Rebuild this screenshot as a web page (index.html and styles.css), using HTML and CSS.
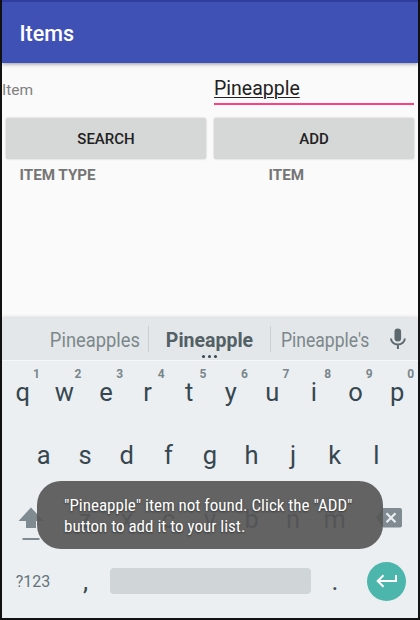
FILE: index.html
```
<!DOCTYPE html>
<html lang="en">
<head>
<meta charset="utf-8">
<title>Items</title>
<link rel="stylesheet" href="styles.css">
</head>
<body>
<div class="screen">
  <header class="appbar"><h1>Items</h1></header>
  <main class="content">
    <div class="field-row">
      <label class="label">Item</label>
      <div class="input"><span>Pineapple</span></div>
    </div>
    <div class="buttons">
      <button><span>SEARCH</span></button>
      <button><span>ADD</span></button>
    </div>
    <div class="heads"><span>ITEM TYPE</span><span>ITEM</span></div>
  </main>
  <section class="keyboard">
    <div class="suggestions">
      <div class="sug first"><span>Pineapples</span></div>
      <div class="sug main"><span>Pineapple</span><i class="dots"></i></div>
      <div class="sug last"><span>Pineapple's</span></div>
      <svg class="mic" width="16" height="22" viewBox="0 0 16 22"><rect x="4.5" y="0.5" width="6.6" height="13" rx="3.3" fill="#5d696e"/><path d="M1 10.5a6.9 6 0 0 0 13.8 0M7.9 16.5V21" fill="none" stroke="#5d696e" stroke-width="2"/></svg>
    </div>
    <div class="keys row1">
      <div class="key">q<sup>1</sup></div><div class="key">w<sup>2</sup></div><div class="key">e<sup>3</sup></div><div class="key">r<sup>4</sup></div><div class="key">t<sup>5</sup></div><div class="key">y<sup>6</sup></div><div class="key">u<sup>7</sup></div><div class="key">i<sup>8</sup></div><div class="key">o<sup>9</sup></div><div class="key">p<sup>0</sup></div>
    </div>
    <div class="keys row2">
      <div class="key">a</div><div class="key">s</div><div class="key">d</div><div class="key">f</div><div class="key">g</div><div class="key">h</div><div class="key">j</div><div class="key">k</div><div class="key">l</div>
    </div>
    <div class="keys row3">
      <div class="side shift"><svg width="26" height="34" viewBox="0 0 26 34"><path d="M13 .5 25.5 14H18v7H8v-7H.5z" fill="#7f8b90"/><path d="M4.5 31h17v2h-17z" fill="#7f8b90"/></svg></div>
      <div class="key">z</div><div class="key">x</div><div class="key">c</div><div class="key">v</div><div class="key">b</div><div class="key">n</div><div class="key">m</div>
      <div class="side back"><svg width="26" height="20" viewBox="0 0 26 20"><path d="M7 0h17a2 2 0 0 1 2 2v15.500a2 2 0 0 1-2 2H7L0 9.750z" fill="#7f8b90"/><path d="m10.500 5.200 9 9m0-9-9 9" stroke="#ebeff2" stroke-width="2.200"/></svg></div>
    </div>
    <div class="bottom">
      <div class="sym"><span>?123</span></div>
      <div class="punct comma">,</div>
      <div class="space"></div>
      <div class="punct dot">.</div>
      <div class="enter"><svg width="22" height="14" viewBox="0 0 22 14"><path d="M20 1v6H2M7.500 1.200 1.700 7l5.800 5.800" fill="none" stroke="#fff" stroke-width="2"/></svg></div>
    </div>
  </section>
  <div class="toast"><p>"Pineapple" item not found. Click the "ADD"</p><p>button to add it to your list.</p></div>
</div>
</body>
</html>
```
FILE: styles.css
```
* { box-sizing: border-box; }
body { margin: 0; background: #111; font-family: Roboto, sans-serif; }
.screen {
  position: relative;
  width: 416px;
  height: 618px;
  margin: 0 2px 2px;
  background: #fafafa;
  overflow: hidden;
  display: flex;
  flex-direction: column;
}
.appbar {
  height: 63px;
  flex: none;
  background: #3f51b5;
  border-top: 2px solid #303f9f;
  box-shadow: 0 1px 4px rgba(0,0,0,.4);
  display: flex;
  align-items: center;
  padding-left: 17.500px;
}
.appbar h1 { margin: 2px 0 0; color: #fff; font-size: 21.500px; font-weight: 500; line-height: 24px; }
.content { height: 255px; flex: none; }
.field-row { display: grid; grid-template-columns: 208px 208px; height: 51px; }
.label { color: #808080; font-size: 15.500px; line-height: 18px; padding-top: 18px; }
.input {
  margin: 13px 4px 0;
  height: 29px;
  border-bottom: 2px solid #ff4081;
  color: #212121;
  font-size: 19.500px;
  line-height: 26px;
}
.input span { text-decoration: underline; text-decoration-thickness: 1px; text-underline-offset: 2px; }
.buttons { display: grid; grid-template-columns: 1fr 1fr; gap: 8px; padding: 4px 4px 0; }
.buttons button {
  height: 41px;
  border: 0;
  border-radius: 2px;
  background: #d6d7d7;
  box-shadow: 0 0 2px rgba(0,0,0,.25);
  color: #212121;
  font: 500 15px/20px Roboto, sans-serif;
  padding: 0;
}
.heads { display: grid; grid-template-columns: 249px 1fr; padding: 7px 0 0 17.500px; color: #757575; font-weight: 700; font-size: 15.200px; line-height: 18px; }
.keyboard { flex: 1; background: #ebeff2; box-shadow: 0 -1px 3px rgba(0,0,0,.15); position: relative; }
.suggestions {
  height: 43px;
  background: #e3e7e9;
  border-bottom: 1px solid #f5f7f8;
  display: flex;
  align-items: center;
  padding-left: 40px;
}
.sug { height: 26px; line-height: 29px; font-size: 19.500px; color: #7c878b; text-align: center; white-space: nowrap; }
.first { width: 107px; border-right: 1px solid #cbd0d2; }
.main { width: 122px; border-right: 1px solid #cbd0d2; font-weight: 700; color: #536066; position: relative; }
.last { width: 109px; }
.sug span { display: inline-block; }
.first span { transform: scaleX(.94); }
.last span { transform: scaleX(.9); }
.dots {
  position: absolute;
  left: 59px;
  bottom: -6px;
  width: 3px;
  height: 3px;
  border-radius: 50%;
  background: #37474f;
  box-shadow: -6px 0 #37474f, 6px 0 #37474f;
}
.mic { margin-left: 10px; }
.keys { display: flex; color: #37474f; font-size: 25.500px; }
.key { width: 41.600px; flex: none; text-align: center; line-height: 28px; position: relative; }
.key sup { position: absolute; left: 31px; top: -11px; font-size: 12px; line-height: 14px; font-weight: 700; color: #7a868b; }
.row1 { padding-top: 17px; height: 80px; }
.row2 { padding-left: 20.800px; height: 64px; }
.row3 { height: 57px; }
.side { width: 62.400px; display: flex; }
.shift { padding: 2px 0 0 16px; }
.back { padding: 3px 0 0 20px; }
.bottom { height: 38px; display: flex; align-items: center; }
.sym { width: 62px; text-align: center; font-size: 16px; color: #65747a; }
.punct { width: 43px; text-align: center; color: #37474f; font-size: 26px; line-height: 30px; }
.space { width: 201px; margin-left: 3px; height: 26px; border-radius: 4px; background: #d0d5d8; }
.dot { width: 48px; }
.enter { width: 39px; height: 39px; margin-left: 8px; border-radius: 50%; background: #4db6ac; display: grid; place-items: center; }
.toast {
  position: absolute;
  left: 35px;
  top: 481px;
  width: 346px;
  height: 68px;
  border-radius: 24px;
  background: rgba(87,87,87,.92);
  padding: 14px 0 0 27px;
  color: #fff;
  font-family: "Roboto Condensed", Roboto, sans-serif;
  font-stretch: 75%;
  font-size: 17px;
  line-height: 21px;
  white-space: nowrap;
  text-shadow: 0 1px 2px rgba(0,0,0,.5);
}
.toast p { margin: 0; }
```
